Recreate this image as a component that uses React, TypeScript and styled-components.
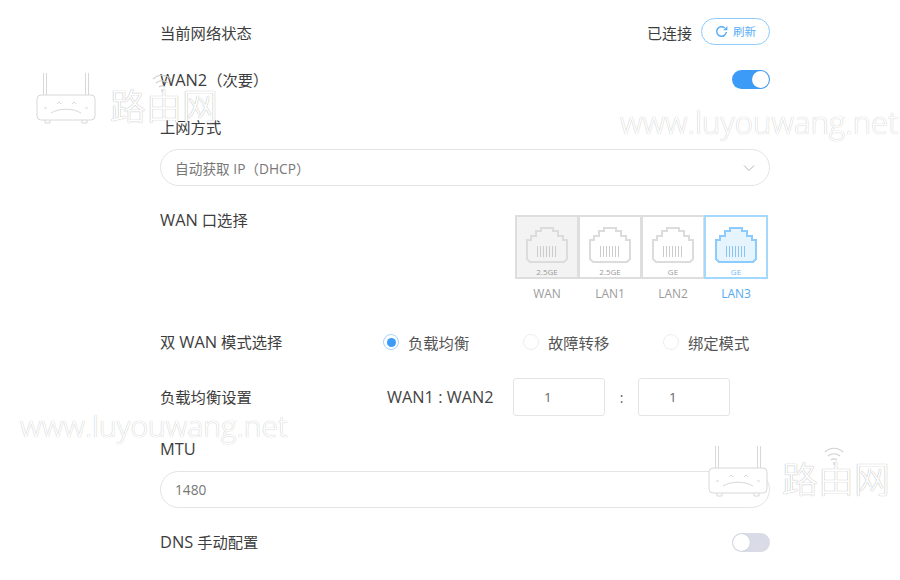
import * as React from "react";
import styled, { createGlobalStyle } from "styled-components";

const Global = createGlobalStyle`
  html, body {
    margin: 0;
    background: #ffffff;
    overflow: hidden;
  }
  body {
    font-family: "Open Sans", "Noto Sans CJK SC", sans-serif;
    color: #3d3d3d;
  }
`;

const Page = styled.div`
  position: relative;
  width: 900px;
  height: 580px;
  overflow: hidden;
`;

const Form = styled.div`
  width: 610px;
  margin-left: 160px;
  padding-top: 15px;
  display: flex;
  flex-direction: column;
`;

const Row = styled.div<{ $h: number; $mb?: number }>`
  height: ${(p) => p.$h}px;
  margin-bottom: ${(p) => p.$mb ?? 0}px;
  display: flex;
  align-items: center;
  justify-content: space-between;
  flex: none;
`;

const Label = styled.span`
  font-size: 15.3px;
  line-height: 20px;
  white-space: nowrap;
`;

// latin runs are a bit bigger than the cjk ones in this ui
const Latin = styled.span`
  font-size: 16.4px;
`;

const Status = styled.div`
  display: flex;
  align-items: center;
  gap: 9px;
  font-size: 15px;
`;

const RefreshBtn = styled.div`
  width: 69px;
  height: 27px;
  margin-bottom: 3px;
  box-sizing: border-box;
  border: 1px solid #8ccbfb;
  border-radius: 14px;
  display: flex;
  align-items: center;
  justify-content: center;
  gap: 5px;
  color: #5aaef5;
  font-size: 11.5px;
`;

const Toggle = styled.div<{ $on?: boolean }>`
  width: 38px;
  height: 19px;
  border-radius: 10px;
  background: ${(p) => (p.$on ? "#3d9bf8" : "#d9dbe6")};
  display: flex;
  align-items: center;
  justify-content: ${(p) => (p.$on ? "flex-end" : "flex-start")};
  padding: 0 1px;
  box-sizing: border-box;
`;

const Knob = styled.div`
  width: 17px;
  height: 17px;
  border-radius: 50%;
  background: #ffffff;
  box-shadow: 0 0 1px rgba(0, 0, 0, 0.2);
`;

const Field = styled.div<{ $mb: number }>`
  height: 37px;
  margin-bottom: ${(p) => p.$mb}px;
  box-sizing: border-box;
  flex: none;
  border: 1px solid #e4e4e4;
  border-radius: 19px;
  padding: 0 14px;
  display: flex;
  align-items: center;
  justify-content: space-between;
  color: #777777;
  font-size: 13.7px;
`;

const PortSection = styled.div`
  height: 126px;
  flex: none;
  display: flex;
  justify-content: space-between;
  align-items: flex-start;
`;

const PortLabel = styled(Label)`
  margin-top: 6px;
`;

const PortGrid = styled.div`
  display: grid;
  grid-template-columns: repeat(4, 63px);
  margin-top: 11px;
  margin-right: 3px;
`;

const PortCol = styled.div`
  display: flex;
  flex-direction: column;
  align-items: center;
  margin-right: -1px;
`;

const PortBox = styled.div<{ $state?: "off" | "on" }>`
  width: 64px;
  height: 64px;
  box-sizing: border-box;
  position: relative;
  border: 2px solid ${(p) => (p.$state === "on" ? "#a5d8fd" : "#dedede")};
  background: ${(p) => (p.$state === "off" ? "#f3f3f3" : "#ffffff")};
  display: flex;
  flex-direction: column;
  align-items: center;
  padding-top: 10px;
  color: ${(p) => (p.$state === "on" ? "#6cb9f5" : "#9a9a9a")};
  z-index: ${(p) => (p.$state === "on" ? 1 : 0)};
`;

const Speed = styled.span`
  font-size: 8px;
  line-height: 10px;
  margin-top: 4px;
`;

const PortName = styled.span<{ $on?: boolean }>`
  margin-top: 7px;
  font-size: 12px;
  line-height: 16px;
  color: ${(p) => (p.$on ? "#54a9f2" : "#9c9c9c")};
`;

const RadioGroup = styled.div`
  display: grid;
  grid-template-columns: repeat(3, 140px);
  margin-left: auto;
  margin-right: -33px;
`;

const RadioItem = styled.div`
  display: flex;
  align-items: center;
  gap: 9px;
  font-size: 15.3px;
  color: #555555;
`;

const RadioDot = styled.div<{ $on?: boolean }>`
  width: 16px;
  height: 16px;
  box-sizing: border-box;
  border-radius: 50%;
  border: 1px solid ${(p) => (p.$on ? "#a5d5fb" : "#eeeeee")};
  display: flex;
  align-items: center;
  justify-content: center;
  &::after {
    content: "";
    width: 9px;
    height: 9px;
    border-radius: 50%;
    background: ${(p) => (p.$on ? "#3d9bf8" : "transparent")};
  }
`;

const RatioGroup = styled.div`
  display: flex;
  align-items: center;
  margin-left: auto;
  margin-right: 40px;
`;

const RatioName = styled.span`
  font-size: 16.3px;
  width: 126px;
  color: #444444;
  white-space: nowrap;
`;

const RatioInput = styled.div`
  width: 92px;
  height: 38px;
  box-sizing: border-box;
  border: 1px solid #e4e4e4;
  border-radius: 3px;
  padding-left: 30px;
  display: flex;
  align-items: center;
  font-size: 13.5px;
  color: #666666;
`;

const Colon = styled.span`
  width: 33px;
  text-align: center;
  font-size: 14px;
  color: #666666;
`;

const WaterText = styled.div<{ $x: number; $y: number; $size: number }>`
  position: absolute;
  left: ${(p) => p.$x}px;
  top: ${(p) => p.$y}px;
  font-size: ${(p) => p.$size}px;
  font-weight: 300;
  line-height: 36px;
  color: #ffffff;
  text-shadow: 0 0 1px #cccccc, 0 0 1px #cccccc;
  white-space: nowrap;
  pointer-events: none;
`;

const WaterLogo = styled.div<{ $x: number; $y: number }>`
  position: absolute;
  left: ${(p) => p.$x}px;
  top: ${(p) => p.$y}px;
  display: flex;
  align-items: flex-end;
  gap: 14px;
  pointer-events: none;
`;

const WaterBrand = styled.span`
  position: relative;
  font-family: "Noto Sans CJK SC", sans-serif;
  font-size: 36px;
  line-height: 40px;
  font-weight: 300;
  color: #ffffff;
  text-shadow: 0 0 1px #bbbbbb, 0 0 1px #bbbbbb;
  white-space: nowrap;
`;

const WifiSlot = styled.span`
  position: absolute;
  left: 41px;
  top: -11px;
  line-height: 0;
`;

const RefreshIcon = () => (
  <svg width="13" height="13" viewBox="0 0 13 13" fill="none" stroke="#5aaef5" strokeWidth="1.5">
    <path d="M9.6 2.8A4.8 4.8 0 1 0 11.3 7" />
    <path d="M12.4 1v4.2H8.2z" fill="#5aaef5" stroke="none" />
  </svg>
);

const Chevron = () => (
  <svg width="12" height="8" viewBox="0 0 12 8" fill="none" stroke="#b5b5b5" strokeWidth="1">
    <path d="M1 1.5l5 5 5-5" />
  </svg>
);

const PortIcon = ({ on }: { on?: boolean }) => {
  const stroke = on ? "#8ccbfb" : "#dcdcdc";
  const bars = on ? "#8cc4ef" : "#cccccc";
  return (
    <svg width="42" height="36" viewBox="0 0 42 36" fill={on ? "#e6f4fe" : "none"} stroke={stroke} strokeWidth="2">
      <path d="M15 1h12v3h5v5h5v4h4v19l-3 3H4l-3-3V13h4V9h5V4h5z" />
      <g stroke={bars} strokeWidth="1">
        {[12, 15, 18, 21, 24, 27, 30].map((x) => (
          <path key={x} d={`M${x - 0.5} 19v11`} />
        ))}
      </g>
    </svg>
  );
};

const RouterMark = () => (
  <svg width="60" height="52" viewBox="0 0 60 52" fill="none" stroke="#d8d8d8" strokeWidth="1">
    <path d="M7.5 1v22M10.5 1v22M49.5 1v22M52.5 1v22" />
    <rect x="1" y="23" width="58" height="25" rx="4" fill="#ffffff" />
    <path d="M9 48v3h5v-3M46 48v3h5v-3" />
    <path d="M15 41c8-5 22-5 30 0M8 36h3M21 32l2-2 2 2M36 32l2-2 2 2M49 36h3" />
  </svg>
);

const WifiMark = () => (
  <svg width="22" height="19" viewBox="0 0 22 19" fill="none" stroke="#d0d0d0" strokeWidth="1.2">
    <path d="M2 6c5-5 13-5 18 0M5 10c3.500-3 8.500-3 12 0M8 14c2-1.500 4-1.500 6 0" />
    <path d="M11 16v3" />
  </svg>
);

const ports = [
  { name: "WAN", speed: "2.5GE", state: "off" as const },
  { name: "LAN1", speed: "2.5GE" },
  { name: "LAN2", speed: "GE" },
  { name: "LAN3", speed: "GE", state: "on" as const },
];

const modes = ["负载均衡", "故障转移", "绑定模式"];

const Brand = () => (
  <WaterBrand>
    <WifiSlot>
      <WifiMark />
    </WifiSlot>
    路由网
  </WaterBrand>
);

const App = () => {
  return (
    <Page>
      <Global />
      <Form>
        <Row $h={35} $mb={18}>
          <Label>当前网络状态</Label>
          <Status>
            已连接
            <RefreshBtn>
              <RefreshIcon />
              刷新
            </RefreshBtn>
          </Status>
        </Row>
        <Row $h={23} $mb={26}>
          <Label><Latin>WAN2</Latin>（次要）</Label>
          <Toggle $on>
            <Knob />
          </Toggle>
        </Row>
        <Row $h={20} $mb={12}>
          <Label>上网方式</Label>
        </Row>
        <Field $mb={18}>
          <span>自动获取 IP（DHCP）</span>
          <Chevron />
        </Field>
        <PortSection>
          <PortLabel><Latin>WAN</Latin> 口选择</PortLabel>
          <PortGrid>
            {ports.map((port) => (
              <PortCol key={port.name}>
                <PortBox $state={port.state}>
                  <PortIcon on={port.state === "on"} />
                  <Speed>{port.speed}</Speed>
                </PortBox>
                <PortName $on={port.state === "on"}>{port.name}</PortName>
              </PortCol>
            ))}
          </PortGrid>
        </PortSection>
        <Row $h={24} $mb={24}>
          <Label>双 <Latin>WAN</Latin> 模式选择</Label>
          <RadioGroup>
            {modes.map((mode, i) => (
              <RadioItem key={mode}>
                <RadioDot $on={i === 0} />
                {mode}
              </RadioItem>
            ))}
          </RadioGroup>
        </Row>
        <Row $h={38} $mb={23}>
          <Label>负载均衡设置</Label>
          <RatioGroup>
            <RatioName>WAN1 : WAN2</RatioName>
            <RatioInput>1</RatioInput>
            <Colon>:</Colon>
            <RatioInput>1</RatioInput>
          </RatioGroup>
        </Row>
        <Row $h={20} $mb={12}>
          <Label><Latin>MTU</Latin></Label>
        </Row>
        <Field $mb={24}>
          <span>1480</span>
        </Field>
        <Row $h={20}>
          <Label><Latin>DNS</Latin> 手动配置</Label>
          <Toggle>
            <Knob />
          </Toggle>
        </Row>
      </Form>
      <WaterText $x={620} $y={104} $size={31.2}>www.luyouwang.net</WaterText>
      <WaterText $x={20} $y={408} $size={30}>www.luyouwang.net</WaterText>
      <WaterLogo $x={36} $y={72}>
        <RouterMark />
        <Brand />
      </WaterLogo>
      <WaterLogo $x={708} $y={445}>
        <RouterMark />
        <Brand />
      </WaterLogo>
    </Page>
  );
};

export default App;
